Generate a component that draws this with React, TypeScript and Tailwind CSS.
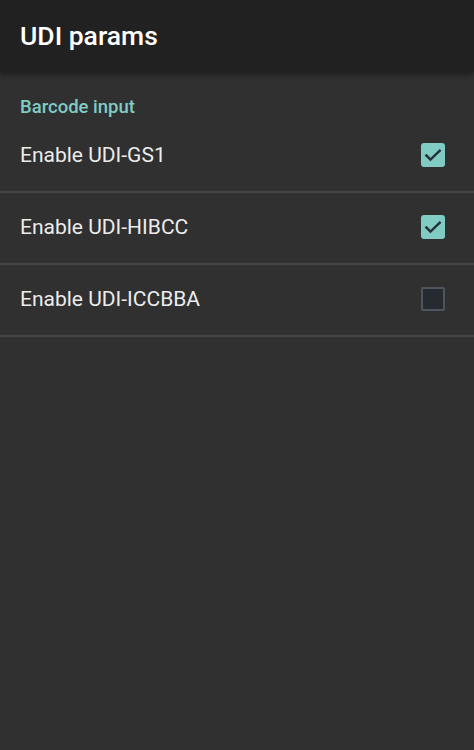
import React from "react";

const rows = [
  { label: "Enable UDI-GS1", checked: true },
  { label: "Enable UDI-HIBCC", checked: true },
  { label: "Enable UDI-ICCBBA", checked: false },
];

function Box({ checked }: { checked: boolean }) {
  if (checked) {
    return (
      <div className="w-[24px] h-[24px] mb-[2px] rounded-[3px] bg-[#80cbc4] flex items-center justify-center">
        <svg width="20" height="20" viewBox="0 0 24 24" fill="none">
          <path d="M4 12.5l5 5L20 7" stroke="#263238" strokeWidth="3" strokeLinecap="square" />
        </svg>
      </div>
    );
  }
  return <div className="w-[24px] h-[24px] mb-[2px] rounded-[2px] border-2 border-[#4f555c] bg-[#262a31]" />;
}

export default function App() {
  return (
    <div className="w-[474px] h-[750px] bg-[#303030] flex flex-col" style={{ fontFamily: "Roboto, 'Noto Sans', sans-serif" }}>
      <div className="h-[72px] bg-[#212121] flex items-center px-[20px] shadow-[0_2px_6px_rgba(0,0,0,0.45)] relative z-10">
        <span className="text-[26.5px] font-medium text-white leading-none">UDI params</span>
      </div>
      <div className="h-[49px] pt-[26px] px-[20px]">
        <div className="text-[18.5px] font-medium text-[#80cbc4] leading-none">Barcode input</div>
      </div>
      {rows.map((r) => (
        <div key={r.label} className="h-[72px] flex items-center justify-between pl-[20px] pr-[29px] border-b-2 border-[#464646]">
          <span className="text-[21px] text-[#ececec]">{r.label}</span>
          <Box checked={r.checked} />
        </div>
      ))}
    </div>
  );
}
